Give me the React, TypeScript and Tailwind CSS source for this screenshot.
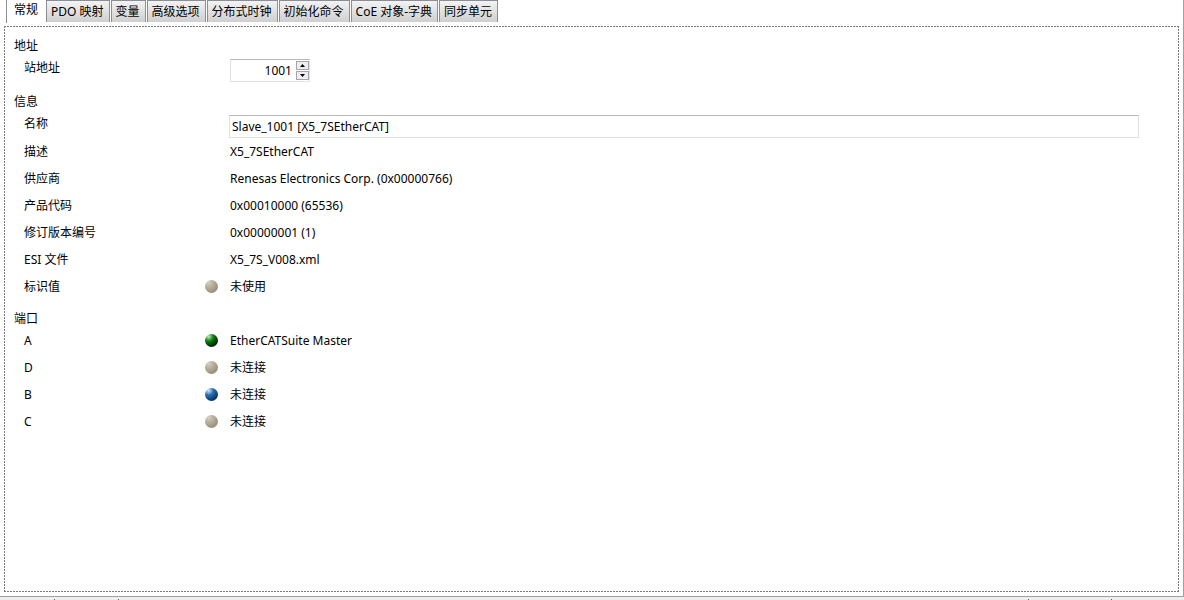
import { useState } from "react";

type Status = "idle" | "linked" | "active";

type Property = {
  label: string;
  value: string;
  status?: Status;
};

const TABS = ["常规", "PDO 映射", "变量", "高级选项", "分布式时钟", "初始化命令", "CoE 对象-字典", "同步单元"];

const INFO: Property[] = [
  { label: "描述", value: "X5_7SEtherCAT" },
  { label: "供应商", value: "Renesas Electronics Corp. (0x00000766)" },
  { label: "产品代码", value: "0x00010000 (65536)" },
  { label: "修订版本编号", value: "0x00000001 (1)" },
  { label: "ESI 文件", value: "X5_7S_V008.xml" },
  { label: "标识值", value: "未使用", status: "idle" },
];

const PORTS: Property[] = [
  { label: "A", value: "EtherCATSuite Master", status: "active" },
  { label: "D", value: "未连接", status: "idle" },
  { label: "B", value: "未连接", status: "linked" },
  { label: "C", value: "未连接", status: "idle" },
];

const ledStops: Record<Status, [string, string, string]> = {
  idle: ["#d6cfc2", "#bab09e", "#9c917e"],
  active: ["#c4ecc4", "#0d8212", "#022604"],
  linked: ["#d4e8f6", "#2a70b4", "#0d3564"],
};

// 2px on, 1px off on all four sides
const dashedFrame =
  "bg-[linear-gradient(90deg,#7a7a7a_2px,transparent_2px),linear-gradient(90deg,#7a7a7a_2px,transparent_2px),linear-gradient(#7a7a7a_2px,transparent_2px),linear-gradient(#7a7a7a_2px,transparent_2px)] [background-size:3px_1px,3px_1px,1px_3px,1px_3px] [background-position:0_0,0_100%,0_0,100%_0] [background-repeat:repeat-x,repeat-x,repeat-y,repeat-y]";

function Led({ status }: { status: Status }) {
  const [light, mid, dark] = ledStops[status];
  return (
    <svg width="14" height="14" viewBox="0 0 14 14" aria-hidden="true">
      <defs>
        <radialGradient id={`led-${status}`} cx="0.28" cy="0.2" r="0.78">
          <stop offset="0" stopColor={light} />
          <stop offset="0.45" stopColor={mid} />
          <stop offset="1" stopColor={dark} />
        </radialGradient>
      </defs>
      <circle cx="7.5" cy="6.5" r="6.5" fill={`url(#led-${status})`} />
    </svg>
  );
}

function PropertyRow({ label, value, status }: Property) {
  return (
    <div className="flex h-[27px] items-center">
      <dt className="w-[180px]">{label}</dt>
      <dd className="flex items-center">
        <span className="w-[26px]">{status && <Led status={status} />}</span>
        {value}
      </dd>
    </div>
  );
}

function StepButton({ up, onClick }: { up?: boolean; onClick: () => void }) {
  return (
    <button
      type="button"
      aria-label={up ? "增加" : "减少"}
      onClick={onClick}
      className="flex h-[9px] w-[13px] items-center justify-center border border-[#a5a5ad] bg-[#eeeeee]"
    >
      <svg width="5" height="3" viewBox="0 0 5 3" aria-hidden="true">
        <path d={up ? "M2.5 0L5 3H0Z" : "M0 0H5L2.5 3Z"} fill="#000" />
      </svg>
    </button>
  );
}

export default function App() {
  const [tab, setTab] = useState(TABS[0]);
  const [address, setAddress] = useState(1001);
  const [name, setName] = useState("Slave_1001 [X5_7SEtherCAT]");

  return (
    <div className="flex min-h-screen flex-col bg-[#f0eded] font-['Noto_Sans','Noto_Sans_CJK_SC',sans-serif] text-xs text-black">
      <main className="flex flex-1 flex-col border-r border-b border-[#a0a0a0] bg-white px-1 pb-1">
        <div role="tablist" className="flex h-[26px] items-start gap-px pl-0.5 whitespace-nowrap">
          {TABS.map((item) => (
            <button
              key={item}
              type="button"
              role="tab"
              aria-selected={tab === item}
              onClick={() => setTab(item)}
              className={
                tab === item
                  ? "h-[23px] border-l border-[#8c8e97] bg-white px-[7px] pb-1"
                  : "h-[22px] border-x border-t border-[#8c8e97] bg-linear-to-b from-[#f3f3f3] to-[#cfcfcf] pr-[5px] pl-1"
              }
            >
              {item}
            </button>
          ))}
        </div>

        <div role="tabpanel" className={`flex-1 px-2.5 pt-2.5 pb-4 ${dashedFrame}`}>
          <section>
            <h2 className="h-5 leading-5">地址</h2>
            <div className="flex h-[27px] items-start pt-0.5 pl-2.5">
              <label htmlFor="address" className="w-[206px] leading-5">
                站地址
              </label>
              <div className="mt-px flex h-[23px] w-20 items-center border border-[#dfe3e8] border-t-[#b9b9bd]">
                <input
                  id="address"
                  value={address}
                  onChange={(e) => setAddress(Number(e.target.value) || 0)}
                  className="w-full min-w-0 pr-1 text-right outline-none"
                />
                <div className="flex flex-col gap-px">
                  <StepButton up onClick={() => setAddress(address + 1)} />
                  <StepButton onClick={() => setAddress(address - 1)} />
                </div>
              </div>
            </div>
          </section>

          <section className="mt-[9px]">
            <h2 className="h-5 leading-5">信息</h2>
            <div className="flex h-[26px] items-start pt-0.5 pl-2.5">
              <label htmlFor="name" className="w-[205px] leading-5">
                名称
              </label>
              <input
                id="name"
                value={name}
                onChange={(e) => setName(e.target.value)}
                className="mt-px mr-[30px] h-[23px] flex-1 border border-[#dfe3e8] border-t-[#b9b9bd] px-0.5 outline-none"
              />
            </div>
            <dl className="pl-2.5">
              {INFO.map((row) => (
                <PropertyRow key={row.label} {...row} />
              ))}
            </dl>
          </section>

          <section className="mt-[9px]">
            <h2 className="h-[18px] leading-5">端口</h2>
            <dl className="pl-2.5">
              {PORTS.map((row) => (
                <PropertyRow key={row.label} {...row} />
              ))}
            </dl>
          </section>
        </div>
      </main>

      {/* Top edge of the status bar */}
      <footer className="flex h-[3px] items-end">
        <span className="ml-[54px] h-px w-px bg-[#606060]" />
        <span className="ml-[63px] h-px w-px bg-[#606060]" />
        <span className="mr-[82px] ml-auto h-px w-px bg-[#606060]" />
        <span className="mr-[72px] h-px w-px bg-[#606060]" />
      </footer>
    </div>
  );
}
